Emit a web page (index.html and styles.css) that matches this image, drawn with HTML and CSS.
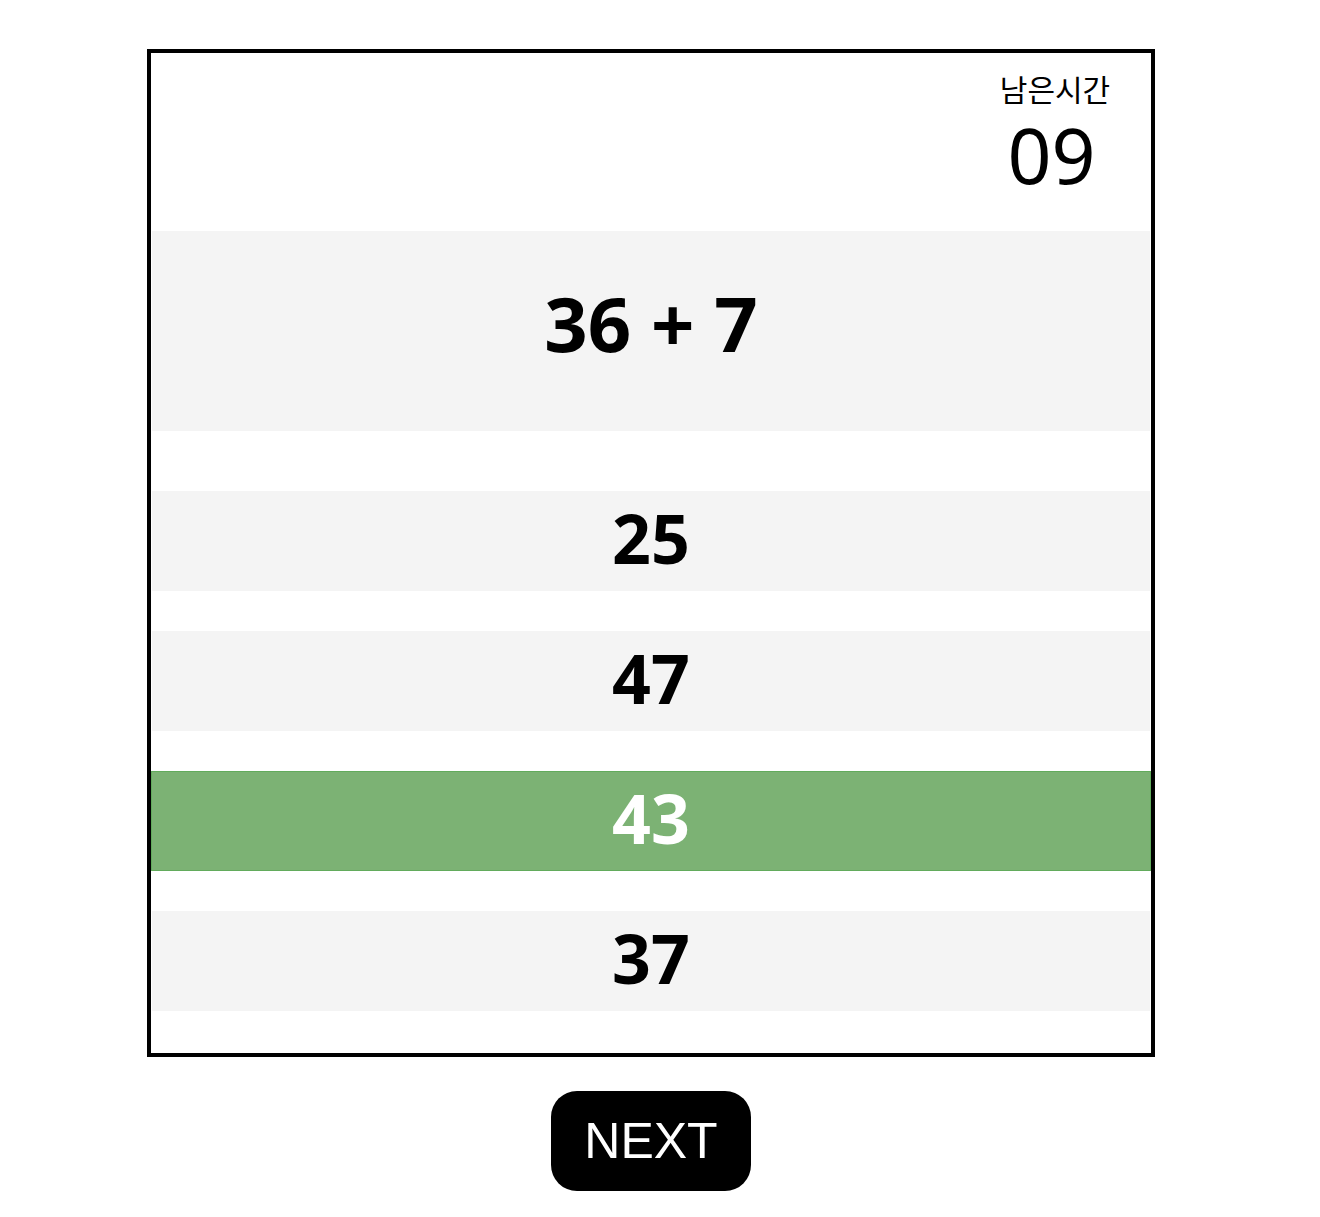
FILE: index.html
```html
<!DOCTYPE html>
<html lang="ko">
<head>
<meta charset="utf-8">
<link rel="stylesheet" href="styles.css">
</head>
<body>
<div class="page">
  <div class="board">
    <div class="header">
      <div class="timer">
        <div class="timer-label">남은시간</div>
        <div class="timer-value">09</div>
      </div>
    </div>
    <div class="question">36 + 7</div>
    <div class="answers">
      <div class="answer">25</div>
      <div class="answer">47</div>
      <div class="answer selected">43</div>
      <div class="answer">37</div>
    </div>
  </div>
  <button class="next">NEXT</button>
</div>
</body>
</html>
```

FILE: styles.css
```css
html, body {
  margin: 0;
  padding: 0;
  background: #ffffff;
}

body {
  font-family: "Noto Sans", "Noto Sans CJK KR", sans-serif;
  color: #000;
}

.page {
  width: 1302px;
  display: flex;
  flex-direction: column;
  align-items: center;
  padding-top: 49px;
}

.board {
  width: 1000px;
  height: 1000px;
  border: 4px solid #000;
  display: flex;
  flex-direction: column;
}

.header {
  height: 178px;
  display: flex;
  justify-content: flex-end;
  box-sizing: border-box;
  padding-top: 20px;
}

.timer {
  width: 120px;
  margin-right: 36px;
  display: flex;
  flex-direction: column;
  align-items: center;
}

.timer-label {
  font-family: "Noto Sans CJK KR", sans-serif;
  font-size: 30px;
  line-height: 30px;
}

.timer-value {
  font-size: 77px;
  line-height: 77px;
  margin-top: 13px;
  margin-right: 7px;
}

.question {
  height: 200px;
  background: #f4f4f4;
  display: flex;
  align-items: center;
  justify-content: center;
  font-size: 76px;
  font-weight: 700;
  box-sizing: border-box;
  padding-bottom: 18px;
  margin: 0 1px 60px 1px;
}

.answers {
  display: flex;
  flex-direction: column;
  gap: 40px;
}

.answer {
  height: 100px;
  background: #f4f4f4;
  display: flex;
  align-items: center;
  justify-content: center;
  font-size: 68px;
  font-weight: 700;
  box-sizing: border-box;
  margin: 0 1px;
  padding-bottom: 7px;
}

.answer.selected {
  background: #7cb274;
  border: 1px solid #62ab5c;
  color: #ffffff;
  margin: 0;
}

.next {
  margin-top: 34px;
  width: 200px;
  height: 100px;
  border: none;
  border-radius: 26px;
  background: #000;
  color: #fff;
  font-family: "Liberation Sans", Arial, sans-serif;
  font-size: 50px;
  padding: 0;
  cursor: pointer;
}
```
